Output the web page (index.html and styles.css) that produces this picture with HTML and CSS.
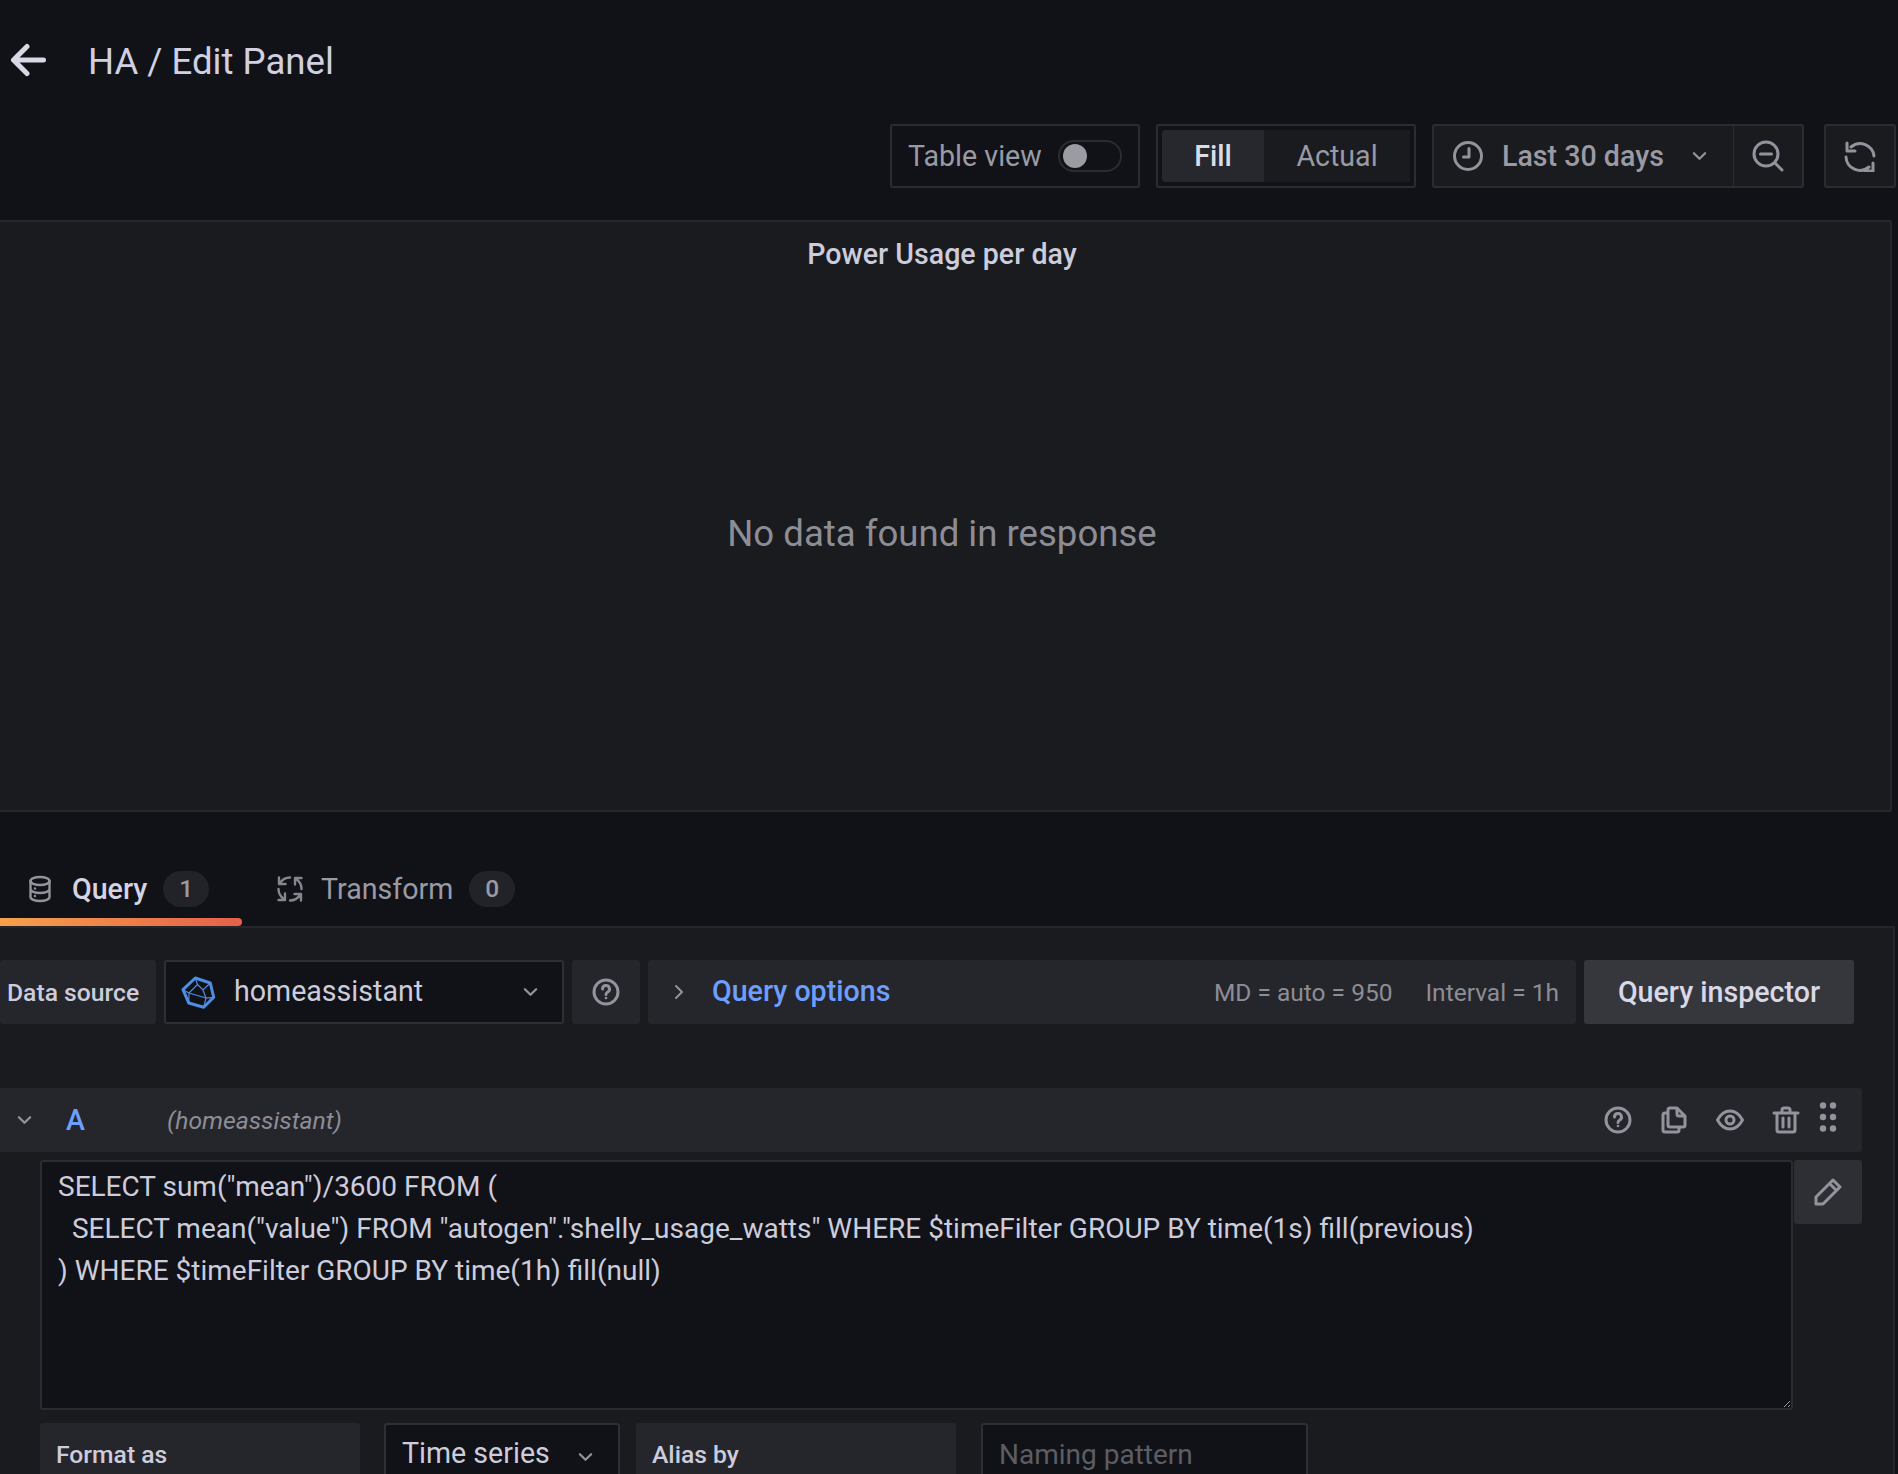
FILE: index.html
```html
<!DOCTYPE html>
<html lang="en">
<head>
<meta charset="utf-8">
<title>HA / Edit Panel</title>
<link rel="stylesheet" href="styles.css">
</head>
<body>
<header class="title-row">
  <svg class="back" viewBox="0 0 36 36"><path d="M33.5 18H3.5M17 4.500 3.500 18 17 31.500"/></svg>
  <h1>HA / Edit Panel</h1>
</header>
<div class="toolbar">
  <div class="box table-view">
    <span>Table view</span>
    <span class="toggle"><i></i></span>
  </div>
  <div class="box fill-group">
    <span class="seg seg-on">Fill</span>
    <span class="seg seg-off">Actual</span>
  </div>
  <div class="box time-group">
    <div class="time-main">
      <svg class="ic28 stroke" viewBox="0 0 30 30"><circle cx="15" cy="15" r="13.500"/><path d="M16 7.500V16H10.500"/></svg>
      <span class="time-text">Last 30 days</span>
      <svg class="chev" viewBox="0 0 16 10"><path d="M2 2l6 6 6-6"/></svg>
    </div>
    <div class="time-zoom">
      <svg class="ic30 stroke" viewBox="0 0 32 32"><circle cx="14" cy="14" r="12"/><path d="M8.500 14h11M23 23l7 7"/></svg>
    </div>
  </div>
  <div class="box refresh">
    <svg class="ic32 stroke" viewBox="0 0 32 32"><path d="M3 3v8h8M7 7A14 14 0 0 1 30 16M29 23v8h-8M2 17A14 14 0 0 0 25 27"/></svg>
  </div>
</div>
<section class="panel">
  <h2>Power Usage per day</h2>
  <p class="no-data">No data found in response</p>
</section>
<nav class="tabs">
  <div class="tab tab-active">
    <svg class="db-icon stroke thin" viewBox="0 0 24 28"><ellipse cx="12" cy="6" rx="9.500" ry="4"/><path d="M2.500 6v16c0 2.200 4.300 4 9.500 4s9.500-1.800 9.500-4V6M2.500 14c0 2.200 4.300 4 9.500 4s9.500-1.800 9.500-4"/><circle class="dot" cx="7" cy="13.500" r="1.200"/><circle class="dot" cx="7" cy="21" r="1.200"/></svg>
    <span>Query</span><b class="badge">1</b>
  </div>
  <div class="tab">
    <svg class="ic26b stroke arrows" viewBox="0 0 28 28">
      <path d="M3 2.500v6.500h6.500M4 8A12 12 0 0 1 14 2.500"/>
      <path transform="rotate(90 14 14)" d="M3 2.500v6.500h6.500M4 8A12 12 0 0 1 14 2.500"/>
      <path transform="rotate(180 14 14)" d="M3 2.500v6.500h6.500M4 8A12 12 0 0 1 14 2.500"/>
      <path transform="rotate(270 14 14)" d="M3 2.500v6.500h6.500M4 8A12 12 0 0 1 14 2.500"/>
    </svg>
    <span>Transform</span><b class="badge">0</b>
  </div>
</nav>
<main class="query">
  <div class="ds-row">
    <div class="label ds-label">Data source</div>
    <div class="select ds-select">
      <svg class="ds-icon" viewBox="-2 -2 35 34"><path class="ds-out" d="M12.300 0 27.300 5 30.700 19.300 20.700 29.300 5.700 25 0 11.700Z"/><path class="ds-in" d="M12.300 0 14.500 6.500 6 15 0 11.700M6 15 5.700 25M14.500 6.500 20 12 27.300 5M20 12 23 20 30.700 19.300M23 20 20.700 29.300M6 15 23 20"/></svg>
      <span class="ds-name">homeassistant</span>
      <svg class="chev" viewBox="0 0 16 10"><path d="M2 2l6 6 6-6"/></svg>
    </div>
    <div class="ds-help">
      <svg class="ic28b stroke" viewBox="0 0 28 28"><circle cx="14" cy="14" r="12"/><path d="M10.500 11a3.500 3.500 0 1 1 5.200 3c-1.200.7-1.700 1.300-1.700 2.400"/><circle class="dot" cx="14" cy="20" r="1.300"/></svg>
    </div>
    <div class="options">
      <svg class="opt-chev" viewBox="0 0 10 16"><path d="M2 2l6 6-6 6"/></svg>
      <span class="opt-title">Query options</span>
      <span class="opt-meta">MD = auto = 950</span>
      <span class="opt-meta">Interval = 1h</span>
    </div>
    <div class="inspector">Query inspector</div>
  </div>
  <div class="row-a">
    <svg class="chev row-chev" viewBox="0 0 16 10"><path d="M2 2l6 6 6-6"/></svg>
    <b class="ref">A</b>
    <em>(homeassistant)</em>
    <div class="row-icons">
      <svg class="ic28b stroke" viewBox="0 0 28 28"><circle cx="14" cy="14" r="12"/><path d="M10.500 11a3.500 3.500 0 1 1 5.200 3c-1.200.7-1.700 1.300-1.700 2.400"/><circle class="dot" cx="14" cy="20" r="1.300"/></svg>
      <svg class="ic28b stroke" viewBox="0 0 28 28"><path d="M8 19V4a2 2 0 0 1 2-2h7l8 8v9a2 2 0 0 1-2 2H10a2 2 0 0 1-2-2ZM17 2v6a2 2 0 0 0 2 2h6M8 7H5a2 2 0 0 0-2 2v15a2 2 0 0 0 2 2h12a2 2 0 0 0 2-2v-3"/></svg>
      <svg class="ic28b stroke" viewBox="0 0 28 28"><path d="M1.500 14C5 7.500 9 5 14 5s9 2.500 12.500 9C23 20.500 19 23 14 23S5 20.500 1.500 14Z"/><circle cx="14" cy="14" r="4"/></svg>
      <svg class="ic28b stroke" viewBox="0 0 28 28"><path d="M2 7h24M10 7V4a2 2 0 0 1 2-2h4a2 2 0 0 1 2 2v3M5 7v17a2 2 0 0 0 2 2h14a2 2 0 0 0 2-2V7M11 12v9M17 12v9"/></svg>
      <svg class="dots" viewBox="0 0 18 30"><circle cx="4" cy="3.500" r="3.200"/><circle cx="14" cy="3.500" r="3.200"/><circle cx="4" cy="15" r="3.200"/><circle cx="14" cy="15" r="3.200"/><circle cx="4" cy="26.500" r="3.200"/><circle cx="14" cy="26.500" r="3.200"/></svg>
    </div>
  </div>
  <div class="editor-row">
    <textarea class="editor" spellcheck="false">SELECT sum("mean")/3600 FROM (
  SELECT mean("value") FROM "autogen"."shelly_usage_watts" WHERE $timeFilter GROUP BY time(1s) fill(previous)
) WHERE $timeFilter GROUP BY time(1h) fill(null)</textarea>
    <div class="edit-btn">
      <svg class="ic28b stroke" viewBox="0 0 28 28"><path d="M2 26V19L19 2l7 7L9 26ZM15.500 5.500l7 7"/></svg>
    </div>
  </div>
  <div class="format-row">
    <div class="label format-label">Format as</div>
    <div class="select time-series"><span>Time series</span><svg class="chev" viewBox="0 0 16 10"><path d="M2 2l6 6 6-6"/></svg></div>
    <div class="label alias-label">Alias by</div>
    <div class="select naming">Naming pattern</div>
  </div>
</main>
</body>
</html>
```
FILE: styles.css
```css
* { box-sizing: border-box; }
html, body { margin: 0; height: 1474px; overflow: hidden; }
body {
  background: #111217;
  color: #ccccdc;
  font-family: Roboto, "Liberation Sans", sans-serif;
  font-size: 28.6px;
}
svg { display: block; flex: none; }
.stroke { fill: none; stroke: #93939d; stroke-width: 3; stroke-linecap: round; stroke-linejoin: round; }
.stroke.thin { stroke-width: 2.4; }
.stroke.arrows { stroke-width: 2.4; stroke: #85858f; }
.dot { fill: #93939d; stroke: none; }
.db-icon { width: 24px; height: 28px; }
.ic26b { width: 28px; height: 28px; }
.ic28b { width: 28px; height: 28px; }
.ic28 { width: 30px; height: 30px; }
.ic30 { width: 32px; height: 32px; }
.ic32 { width: 32px; height: 32px; }
.chev { width: 15px; height: 10px; fill: none; stroke: #93939d; stroke-width: 2.4; stroke-linecap: round; stroke-linejoin: round; }

.title-row { height: 124px; padding: 42px 0 0 10px; display: flex; align-items: flex-start; }
.back { width: 36px; height: 36px; fill: none; stroke: #d8d8e6; stroke-width: 5; stroke-linecap: round; stroke-linejoin: round; }
h1 { margin: -1px 0 0 42px; font-size: 36.6px; line-height: 42px; font-weight: 400; color: #d0d0e0; }

.toolbar { height: 64px; display: flex; padding-right: 2px; justify-content: flex-end; gap: 16px; }
.box { border: 2px solid #2a2c32; border-radius: 3px; display: flex; align-items: center; height: 64px; }
.table-view { width: 250px; padding-left: 16px; color: #9a9aa5; gap: 16px; font-weight: 400; }
.toggle { width: 64px; height: 32px; border: 2px solid #2a2c32; border-radius: 16px; padding: 2px 3px; }
.toggle i { display: block; width: 24px; height: 24px; border-radius: 50%; background: #9b9ba4; }
.fill-group { width: 260px; padding: 4px; }
.seg { height: 52px; display: flex; align-items: center; justify-content: center; font-weight: 500; }
.seg-on { width: 102px; background: #26282e; color: #dcdce8; border-radius: 3px 0 0 3px; }
.seg-off { width: 146px; background: #1a1b1f; color: #9a9aa5; font-weight: 400; }
.time-group { width: 372px; background: #1a1b1f; }
.time-main { width: 300px; height: 100%; display: flex; align-items: center; padding-left: 19px; border-right: 1px solid #2a2c32; }
.time-text { margin-left: 19px; width: 190px; font-weight: 500; color: #9a9aa5; }
.time-zoom { flex: 1; display: flex; justify-content: center; }
.refresh { width: 72px; margin-left: 4px; background: #1a1b1f; justify-content: center; }

.panel {
  height: 592px; margin: 32px 6px 0 0; background: #1a1b1f;
  border: 2px solid #26272c; border-left: 0; border-radius: 0 3px 3px 0;
  text-align: center; padding-right: 6px;
}
.panel h2 { margin: 14px 0 0; font-size: 28.6px; line-height: 36px; font-weight: 500; color: #ccccdc; }
.no-data { margin: 240px 0 0; font-size: 36.6px; line-height: 44px; color: #8d8d96; }

.tabs { height: 114px; padding-top: 59px; display: flex; }
.tab { display: flex; align-items: flex-start; height: 55px; line-height: 36px; color: #9a9aa5; }
.tab svg { margin-top: 4px; }
.tab span { margin-left: 17px; }
.tab-active { width: 242px; padding-left: 28px; color: #d4d4e2; font-weight: 500; position: relative; }
.tab-active span { margin-left: 20px; }
.tab-active::after {
  content: ""; position: absolute; left: 0; right: 0; bottom: 0; height: 8px;
  background: linear-gradient(90deg, #f6a14a, #e5604a); border-radius: 0 4px 4px 0;
}
.tab:not(.tab-active) { margin-left: 34px; }
.badge { margin-left: 16px; width: 46px; height: 36px; border-radius: 18px; background: #222328; color: #9a9aa5; font-size: 24.500px; font-weight: 500; text-align: center; }

.query {
  width: 1895px; height: 548px; background: #1a1b1f;
  border-top: 2px solid #25262b; border-right: 2px solid #25262b;
  padding-top: 32px;
}
.ds-row { display: flex; height: 64px; }
.label { background: #25262b; border-radius: 3px; font-weight: 500; font-size: 24.700px; color: #ccccdc; display: flex; align-items: center; }
.ds-label { width: 156px; padding-left: 7px; }
.select { background: #111217; border: 2px solid #2e2f35; border-radius: 3px; display: flex; align-items: center; }
.ds-select { width: 400px; height: 64px; margin-left: 8px; padding: 0 24px 0 15px; }
.ds-icon { width: 35px; height: 34px; margin-top: 2px; }
.ds-out { fill: none; stroke: #4f8ee0; stroke-width: 3; stroke-linejoin: round; }
.ds-in { fill: none; stroke: #4f8ee0; stroke-width: 1.2; }
.ds-name { flex: 1; margin-left: 18px; margin-top: -3px; color: #ccccdc; }
.ds-help { width: 68px; margin-left: 8px; background: #25262b; border-radius: 3px; display: flex; align-items: center; justify-content: center; }
.options { width: 928px; margin-left: 8px; background: #25262b; border-radius: 3px; display: flex; align-items: center; padding: 0 17px 0 26px; }
.opt-chev { width: 10px; height: 16px; fill: none; stroke: #93939d; stroke-width: 2; stroke-linecap: round; stroke-linejoin: round; }
.opt-title { color: #6e9fff; font-weight: 500; margin: -3px auto 0 28px; }
.opt-meta { color: #8d8d96; font-size: 24.500px; margin-left: 33px; }
.inspector { width: 270px; margin-left: 8px; background: #36373d; border-radius: 3px; display: flex; align-items: center; justify-content: center; font-weight: 500; color: #d8d8e6; }

.row-a { width: 1862px; height: 64px; margin-top: 64px; background: #25262b; border-radius: 0 3px 3px 0; display: flex; align-items: center; padding-left: 17px; }
.ref { margin-left: 34px; color: #6e9fff; font-size: 28.6px; font-weight: 500; width: 101px; }
.row-a em { color: #8d8d96; font-size: 24.700px; }
.row-icons { margin-left: auto; display: flex; align-items: center; gap: 28px; padding-right: 25px; }
.dots { width: 18px; height: 30px; fill: #93939d; margin-left: -9px; margin-top: -6px; }

.editor-row { display: flex; height: 250px; margin: 8px 0 0 40px; width: 1822px; }
.editor {
  width: 1753px; height: 250px; background: #111217; color: #ccccdc;
  border: 2px solid #2a2c32; border-radius: 3px; padding: 4px 16px;
  font-family: Roboto, "Liberation Sans", sans-serif; font-size: 28px; line-height: 42px;
  outline: none; resize: both; overflow: hidden; margin: 0;
}
.edit-btn { width: 68px; height: 64px; margin-left: 1px; background: #2e2f35; border-radius: 3px; display: flex; align-items: center; justify-content: center; }

.format-row { display: flex; height: 64px; margin: 13px 0 0 40px; }
.format-label { width: 320px; padding-left: 16px; padding-bottom: 2px; }
.time-series { width: 236px; margin-left: 24px; padding-left: 16px; gap: 28px; color: #ccccdc; }
.time-series span { margin-top: -4px; }
.time-series .chev { margin-top: 4px; }
.alias-label { width: 320px; margin-left: 16px; padding-left: 16px; padding-bottom: 2px; }
.naming { width: 327px; margin-left: 25px; padding-left: 16px; padding-bottom: 2px; color: #5c5d63; font-size: 28px; }
```
